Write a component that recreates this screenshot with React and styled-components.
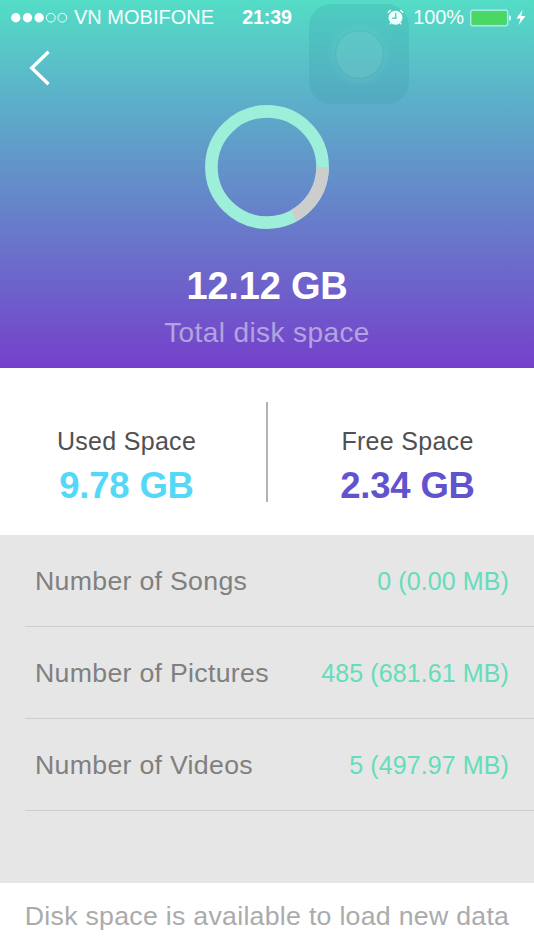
import styled, { createGlobalStyle } from 'styled-components'

const disk = { total: '12.12 GB', used: '9.78 GB', free: '2.34 GB' }

const media = [
	{ name: 'Number of Songs', value: '0 (0.00 MB)' },
	{ name: 'Number of Pictures', value: '485 (681.61 MB)' },
	{ name: 'Number of Videos', value: '5 (497.97 MB)' },
]

const StatusBar = () => (
	<Status>
		<Carrier>
			<svg width='58' height='12' viewBox='0 0 58 12'>
				<g fill='#fff'>
					<circle cx='4.8' cy='5.7' r='4.7' />
					<circle cx='16.5' cy='5.7' r='4.7' />
					<circle cx='28.1' cy='5.7' r='4.7' />
				</g>
				<g fill='none' stroke='#fff' strokeWidth='0.9'>
					<circle cx='39.8' cy='5.7' r='4.4' />
					<circle cx='51.3' cy='5.7' r='4.4' />
				</g>
			</svg>
			<span>VN MOBIFONE</span>
		</Carrier>
		<Clock>21:39</Clock>
		<Power>
			<svg width='17' height='17' viewBox='0 0 17 17'>
				<circle cx='8.5' cy='8.8' r='7' fill='#f0fffb' />
				<path
					d='M.8 3.8 3.8 1M13.2 1l3 2.8M3.8 14l-1 1.2M13.2 14l1 1.2'
					stroke='#f0fffb'
					strokeWidth='1.5'
				/>
				<path
					d='M8.7 4.2v5H5.2'
					fill='none'
					stroke='#55cfc4'
					strokeWidth='1.5'
				/>
			</svg>
			<Percent>100%</Percent>
			<svg width='42' height='18' viewBox='0 0 42 18'>
				<rect
					x='.7'
					y='1.2'
					width='37'
					height='15.6'
					rx='2'
					fill='none'
					stroke='#b5f0e3'
					strokeWidth='1.2'
				/>
				<rect x='1.8' y='2.3' width='34.8' height='13.4' rx='.8' fill='#4bd763' />
				<path d='M39 6.2c1.3.2 2 1.2 2 2.8s-.7 2.6-2 2.8z' fill='#dcfaf4' />
			</svg>
			<Bolt width='10' height='17' viewBox='0 0 10 17'>
				<path d='M6.7.8.4 9.5h4.1L2.7 16 9.5 7.1H5.2z' fill='#fff' />
			</Bolt>
		</Power>
	</Status>
)

const DiskRing = () => (
	<svg width='124' height='124' viewBox='-62 -62 124 124'>
		<circle r='55.6' fill='none' stroke='#9defda' strokeWidth='12.6' />
		<circle
			r='55.6'
			fill='none'
			stroke='#cdcdcd'
			strokeWidth='12.6'
			pathLength='360'
			strokeDasharray='61.4 360'
		/>
	</svg>
)

const App = () => {
	return (
		<Wrapper>
			<GlobalStyle />
			<Hero>
				<AssistiveTouch>
					<span />
				</AssistiveTouch>
				<StatusBar />
				<BackButton aria-label='Back'>
					<svg width='22' height='36' viewBox='0 0 22 36'>
						<path
							d='M19.6 1.8 2.8 18 19.6 34.2'
							fill='none'
							stroke='#fff'
							strokeWidth='3.4'
						/>
					</svg>
				</BackButton>
				<Summary>
					<DiskRing />
					<Total>{disk.total}</Total>
					<Caption>Total disk space</Caption>
				</Summary>
			</Hero>
			<Stats>
				<Stat>
					<StatLabel>Used Space</StatLabel>
					<StatValue $color='#54d8f8'>{disk.used}</StatValue>
				</Stat>
				<Divider />
				<Stat>
					<StatLabel>Free Space</StatLabel>
					<StatValue $color='#6152cd'>{disk.free}</StatValue>
				</Stat>
			</Stats>
			<List>
				{media.map((item) => (
					<Row key={item.name}>
						<RowName>{item.name}</RowName>
						<RowValue>{item.value}</RowValue>
					</Row>
				))}
			</List>
			<Footer>Disk space is available to load new data</Footer>
		</Wrapper>
	)
}
export default App

const GlobalStyle = createGlobalStyle`
	* {
		box-sizing: border-box;
	}

	body {
		margin: 0;
	}

	p {
		margin: 0;
	}
`

const Wrapper = styled.div`
	display: flex;
	flex-direction: column;
	width: 534px;
	height: 950px;
	overflow: hidden;
	background: #fff;
	font-family: 'Liberation Sans', Arial, sans-serif;
	white-space: nowrap;

	svg {
		display: block;
		flex-shrink: 0;
	}
`

const Hero = styled.header`
	position: relative;
	display: flex;
	flex-direction: column;
	height: 368px;
	background: linear-gradient(#54ddc6, #5cb0c9 27%, #7540cb);
`

const Status = styled.div`
	position: relative;
	display: grid;
	grid-template-columns: 1fr auto 1fr;
	align-items: center;
	height: 35px;
	padding: 0 8px 0 11px;
	color: #f4fffc;
	font-size: 20px;
	line-height: 35px;
`

const Carrier = styled.div`
	display: flex;
	align-items: center;
	gap: 5px;
`

const Clock = styled.span`
	color: #fff;
	font-size: 19.6px;
	font-weight: 700;
	letter-spacing: -0.1px;
	margin-right: 3px;
`

const Power = styled.div`
	display: flex;
	align-items: center;
	justify-content: flex-end;
`

const Percent = styled.span`
	margin: 0 6px 0 9px;
	letter-spacing: -0.1px;
`

const Bolt = styled.svg`
	margin-left: 4px;
`

const AssistiveTouch = styled.div`
	position: absolute;
	top: 4px;
	left: 309px;
	display: flex;
	align-items: center;
	justify-content: center;
	width: 100px;
	height: 100px;
	border-radius: 22px;
	background: rgba(50, 150, 165, 0.2);

	span {
		width: 47px;
		height: 47px;
		border-radius: 50%;
		background: rgba(150, 225, 220, 0.22);
		box-shadow: 0 0 0 1px rgba(60, 155, 170, 0.16),
			0 0 0 5px rgba(150, 225, 220, 0.06),
			0 0 0 8px rgba(150, 225, 220, 0.04);
	}
`

const BackButton = styled.button`
	align-self: flex-start;
	height: 70px;
	padding: 15px 29px 19px;
	border: 0;
	background: none;
	cursor: pointer;
`

const Summary = styled.div`
	display: flex;
	flex-direction: column;
	align-items: center;
`

const Total = styled.p`
	margin-top: 34px;
	color: #fff;
	font-size: 38px;
	font-weight: 700;
	letter-spacing: -0.2px;
	line-height: 46px;
`

const Caption = styled.p`
	margin-top: 7px;
	color: #b3a3df;
	font-size: 28px;
	letter-spacing: 0.4px;
	line-height: 34px;
`

const Stats = styled.section`
	display: flex;
	height: 167px;
	padding-top: 34px;
`

const Stat = styled.div`
	flex: 1;
	display: flex;
	flex-direction: column;
	align-items: center;
	padding-top: 24px;

	/* keeps both figures closer to the screen edges than to the divider */
	&:first-child {
		padding-right: 13px;
	}

	&:last-child {
		padding-left: 13px;
	}
`

const StatLabel = styled.p`
	color: #505050;
	font-size: 25px;
	letter-spacing: 0.3px;
	line-height: 30px;
`

const StatValue = styled.p`
	margin-top: 8px;
	color: ${({ $color }) => $color};
	font-size: 36.5px;
	font-weight: 700;
	letter-spacing: -0.2px;
	line-height: 44px;
`

const Divider = styled.div`
	width: 2px;
	height: 100px;
	background: #b3b3b3;
`

const List = styled.section`
	height: 348px;
	padding-left: 25px;
	background: #e6e6e6;
`

const Row = styled.div`
	display: flex;
	align-items: center;
	justify-content: space-between;
	height: 92px;
	padding: 1px 25px 0 10px;
	border-bottom: 1px solid #cdcdcd;
`

const RowName = styled.span`
	color: #808080;
	font-size: 26.7px;
	letter-spacing: 0.3px;
`

const RowValue = styled.span`
	color: #65dcbb;
	font-size: 25px;
	letter-spacing: 0.1px;
`

const Footer = styled.footer`
	flex: 1;
	color: #ababab;
	font-size: 26.7px;
	letter-spacing: 0.28px;
	line-height: 67px;
	text-align: center;
`
